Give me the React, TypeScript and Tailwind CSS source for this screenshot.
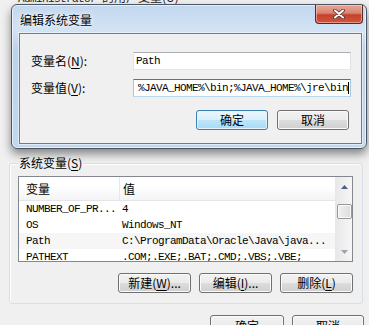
import React from "react";

const cjk = { fontFamily: '"Noto Sans CJK SC", "Liberation Sans", sans-serif' };
const mono = { fontFamily: '"Liberation Mono", "Noto Sans CJK SC", monospace' };

const btnBase =
  "h-[20px] rounded-[3px] border border-[#707070] bg-[linear-gradient(#f2f2f2_0%,#ebebeb_50%,#dddddd_50%,#cfcfcf_100%)] shadow-[inset_0_0_0_1px_#fbfbfb] text-[12px] leading-[18px] text-black flex items-center justify-center";
const btnDefault =
  "h-[20px] rounded-[3px] border border-[#3c7fb1] bg-[linear-gradient(#eaf6fd_0%,#d9f0fc_50%,#bee6fd_50%,#a7d9f5_100%)] shadow-[inset_0_0_0_1px_#e4f4fc] text-[12px] leading-[18px] text-black flex items-center justify-center";

interface Row {
  name: string;
  value: string;
  hover?: boolean;
}

const rows: Row[] = [
  { name: "NUMBER_OF_PR...", value: "4" },
  { name: "OS", value: "Windows_NT" },
  { name: "Path", value: "C:\\ProgramData\\Oracle\\Java\\java...", hover: true },
  { name: "PATHEXT", value: ".COM;.EXE;.BAT;.CMD;.VBS;.VBE;" },
];

// mnemonic letter, underlined like the win32 labels
const Key = ({ k }: { k: string }) => (
  <>
    (<span className="underline underline-offset-2">{k}</span>)
  </>
);

const CloseIcon = () => (
  <svg width="12" height="10" viewBox="0 0 12 10">
    <path d="M2 1.5 L10 8.5 M10 1.5 L2 8.5" stroke="#4a3030" strokeWidth="3.6" strokeLinecap="round" />
    <path d="M2 1.5 L10 8.5 M10 1.5 L2 8.5" stroke="#ffffff" strokeWidth="2" strokeLinecap="round" />
  </svg>
);

const App: React.FC = () => {
  return (
    <div className="relative w-[369px] h-[325px] overflow-hidden bg-[#f0f0f0] text-[12px] text-black" style={cjk}>
      {/* underlying Environment Variables window */}
      <div className="h-[14px] mt-[-10px] pl-[18px] leading-[14px] text-[#222] whitespace-nowrap">
        <span className="text-[11px] tracking-[-0.6px]" style={mono}>
          Administrator{" "}
        </span>
        的用户变量<Key k="U" />
      </div>

      <div className="relative ml-[9px] mt-[159px] w-[354px] h-[141px] rounded-[3px] border border-[#d5dfe5] shadow-[inset_1px_1px_0_#ffffff]">
        <div className="absolute left-[8px] top-[-9px] px-[1px] bg-[#f0f0f0] leading-[16px]">
          系统变量<Key k="S" />
        </div>

        {/* list view */}
        <div className="mt-[12px] ml-[8px] w-[335px] h-[86px] border border-[#828790] bg-white flex overflow-hidden">
          <div className="flex-1 flex flex-col">
            <div className="h-[24px] shrink-0 flex border-b border-[#e5e5e5] bg-[linear-gradient(#ffffff_0%,#ffffff_40%,#f3f4f6_100%)]">
              <div className="w-[101px] pl-[7px] border-r border-[#e3e8ee] leading-[24px]">变量</div>
              <div className="flex-1 pl-[3px] leading-[24px]">值</div>
            </div>
            {rows.map((r) => (
              <div
                key={r.name}
                className={`h-[16px] flex shrink-0 text-[11px] tracking-[-0.6px] leading-[16px] whitespace-nowrap ${
                  r.hover ? "bg-[#f6f6f6]" : "bg-white"
                }`}
                style={mono}
              >
                <div className="w-[101px] pl-[7px]">{r.name}</div>
                <div className="flex-1 pl-[2px] overflow-hidden">{r.value}</div>
              </div>
            ))}
          </div>
          {/* scrollbar */}
          <div className="w-[17px] h-full border-l border-[#e8e8e8] bg-[linear-gradient(90deg,#e8e8e8,#f6f6f6)] flex flex-col items-center">
            <div className="h-[17px] flex items-center justify-center pt-[3px]">
              <svg width="7" height="4" viewBox="0 0 7 4">
                <path d="M0 4 L3.5 0 L7 4 Z" fill="#4d6185" />
              </svg>
            </div>
            <div className="mt-[10px] w-[15px] h-[15px] rounded-[2px] border border-[#979797] bg-[linear-gradient(90deg,#f1f1f1,#dcdcdc)] shadow-[inset_0_0_0_1px_#fbfbfb]" />
            <div className="flex-1" />
            <div className="h-[17px] flex items-center justify-center pb-[2px]">
              <svg width="7" height="4" viewBox="0 0 7 4">
                <path d="M0 0 L3.5 4 L7 0 Z" fill="#9aa3b0" />
              </svg>
            </div>
          </div>
        </div>

        <div className="mt-[11px] pr-[9px] flex justify-end gap-[8px]">
          <div className={`${btnBase} w-[73px]`}>
            新建<Key k="W" />...
          </div>
          <div className={`${btnBase} w-[73px]`}>
            编辑<Key k="I" />...
          </div>
          <div className={`${btnBase} w-[73px]`}>
            删除<Key k="L" />
          </div>
        </div>
      </div>

      <div className="mt-[11px] pr-[5px] flex justify-end gap-[8px]">
        <div className={`${btnBase} w-[74px] h-[22px]`}>确定</div>
        <div className={`${btnBase} w-[72px] h-[22px]`}>取消</div>
      </div>

      {/* edit dialog on top */}
      <div className="absolute left-[11px] top-[4px] w-[356px] h-[145px] rounded-[6px] border border-[#4b5563] bg-[linear-gradient(#c2d7ee_0%,#d3e3f4_18%,#bcd3ec_30%,#c3d8ef_100%)] shadow-[0_5px_10px_rgba(0,0,0,0.45),inset_0_0_0_1px_rgba(255,255,255,0.6)] pl-[7px] pr-[4px] flex flex-col">
        <div className="h-[28px] flex items-start justify-between">
          <div className="pl-[1px] pt-[7px] leading-[16px] text-black [text-shadow:0_0_6px_#ffffff,0_0_3px_#ffffff]">编辑系统变量</div>
          <div className="mt-0 mr-[-1px] w-[48px] h-[19px] rounded-b-[4px] border border-t-0 border-[#5a2a22] bg-[linear-gradient(#e8a796_0%,#d98570_45%,#c4412b_55%,#d2573d_100%)] shadow-[inset_0_0_0_1px_rgba(255,220,210,0.5)] flex items-center justify-center">
            <CloseIcon />
          </div>
        </div>

        <div className="h-[111px] border border-[#6d7d8f] bg-[#f0f0f0] pl-[11px] pr-[10px] pt-[18px] shadow-[0_0_0_1px_rgba(255,255,255,0.5)]">
          <div className="flex items-center h-[18px]">
            <div className="w-[102px]">
              变量名<Key k="N" />:
            </div>
            <div
              className="w-[218px] h-[18px] border border-[#abadb3] border-l-[#e2e3ea] border-r-[#dbdfe6] border-b-[#e3e9ef] bg-white pl-[2px] text-[11px] tracking-[-0.6px] leading-[16px]"
              style={mono}
            >
              Path
            </div>
          </div>
          <div className="flex items-center h-[18px] mt-[9px]">
            <div className="w-[102px]">
              变量值<Key k="V" />:
            </div>
            <div
              className="relative w-[218px] h-[18px] border border-[#3d7bad] border-l-[#a4c9e3] border-r-[#a4c9e3] border-b-[#b7d9ed] bg-white pl-[4px] text-[11px] tracking-[-0.6px] leading-[16px] whitespace-nowrap overflow-hidden"
              style={mono}
            >
              %JAVA_HOME%\bin;%JAVA_HOME%\jre\bin
              <span className="absolute right-[1px] top-[2px] w-[1px] h-[12px] bg-black" />
            </div>
          </div>
          <div className="mt-[13px] pr-[2px] flex justify-end gap-[9px]">
            <div className={`${btnDefault} w-[72px]`}>确定</div>
            <div className={`${btnBase} w-[72px]`}>取消</div>
          </div>
        </div>
      </div>
    </div>
  );
};

export default App;
